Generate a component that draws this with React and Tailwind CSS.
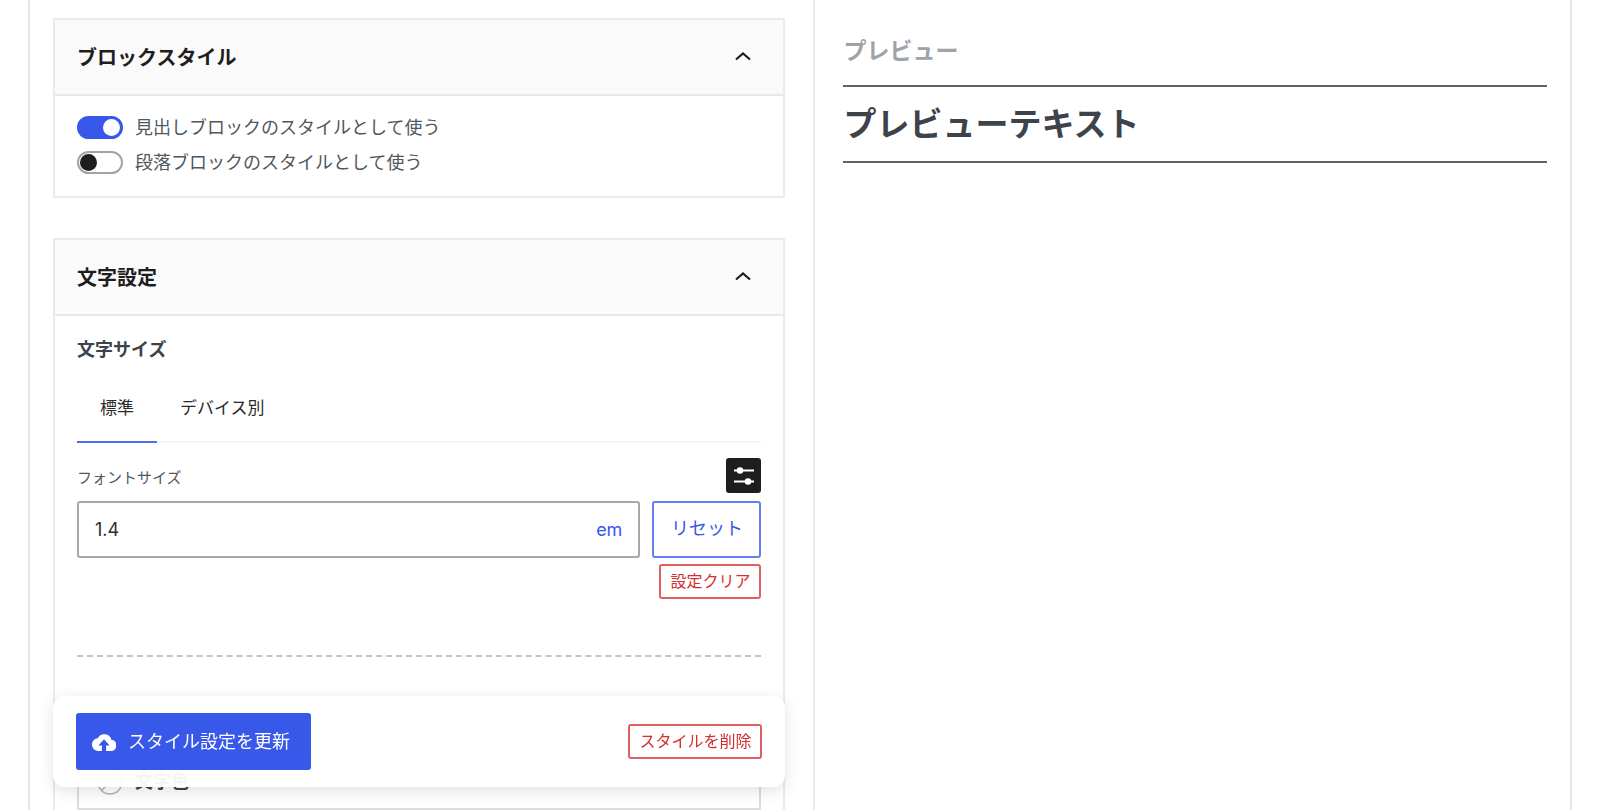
import { useState } from "react";

function Panel({ title, className = "", children }) {
  const [open, setOpen] = useState(true);

  return (
    <section className={`border-2 border-[#ebebec] ${className}`}>
      <h2>
        <button
          type="button"
          aria-expanded={open}
          onClick={() => setOpen(!open)}
          className="flex h-19 w-full items-center justify-between border-b-2 border-[#e8e8ea] bg-[#fafafa] pt-[2px] pr-8 pl-[22px] text-xl font-bold text-[#1e1e1e]"
        >
          {title}
          <svg
            viewBox="0 0 16 14"
            className={open ? "h-[14px] w-4" : "h-[14px] w-4 rotate-180"}
            fill="none"
            stroke="currentColor"
            strokeWidth="2.2"
          >
            <path d="M1 8.5 8 2.5 15 8.5" />
          </svg>
        </button>
      </h2>
      {open && <div className="px-[22px]">{children}</div>}
    </section>
  );
}

function Toggle({ label, defaultChecked = false }) {
  return (
    <label className="flex w-fit items-center gap-3 text-[18px] leading-[23px] text-[#50575e]">
      <input type="checkbox" role="switch" defaultChecked={defaultChecked} className="peer sr-only" />
      <span className="h-[23px] w-[46px] rounded-full border-2 border-[#a3a3a3] bg-white p-[1px] peer-checked:border-[#3858e9] peer-checked:bg-[#3858e9] peer-checked:[&>span]:translate-x-[23px] peer-checked:[&>span]:bg-white">
        <span className="block h-[17px] w-[17px] rounded-full bg-[#1e1e1e]" />
      </span>
      {label}
    </label>
  );
}

function DangerButton({ children, onClick }) {
  return (
    <button
      type="button"
      onClick={onClick}
      className="h-[35px] rounded-[3px] border-2 border-[#df6060] px-[9px] text-[16px] leading-[31px] text-[#d32f2f]"
    >
      {children}
    </button>
  );
}

export default function App() {
  const [tab, setTab] = useState("標準");
  const [size, setSize] = useState("1.4");

  return (
    <div className="h-screen overflow-hidden bg-white px-7 font-['Inter','Noto_Sans_CJK_JP',sans-serif] text-[#3c434a]">
      <main className="grid grid-cols-[51fr_49fr] border-x-2 border-[#e6e6e9]">
        <div className="border-r-2 border-[#ececf1] pt-[18px] pr-7 pb-6 pl-[23px]">
          <Panel title="ブロックスタイル">
            <div className="grid gap-3 pt-5 pb-[22px]">
              <Toggle label="見出しブロックのスタイルとして使う" defaultChecked />
              <Toggle label="段落ブロックのスタイルとして使う" />
            </div>
          </Panel>

          <Panel title="文字設定" className="mt-10">
            <h3 className="pt-5 text-[18px] leading-7 font-bold">文字サイズ</h3>

            <div role="tablist" className="mt-3 flex border-b-2 border-[#f5f5f5] text-[17px] text-[#2c2c2c]">
              {["標準", "デバイス別"].map((name) => (
                <button
                  key={name}
                  type="button"
                  role="tab"
                  aria-selected={tab === name}
                  onClick={() => setTab(name)}
                  className={`-mb-[2px] h-[67px] border-b-2 px-[23px] ${tab === name ? "border-[#4f6bf0]" : "border-transparent"}`}
                >
                  {name}
                </button>
              ))}
            </div>

            <div className="mt-[15px] flex items-end justify-between">
              <label htmlFor="font-size" className="text-[15px] leading-[31px] text-[#50575e]">フォントサイズ</label>
              <button type="button" aria-label="単位" className="flex h-[35px] w-[35px] items-center justify-center rounded-[3px] bg-[#1e1e1e] text-white">
                <svg viewBox="0 0 22 22" className="h-[22px] w-[22px]" fill="currentColor" stroke="currentColor" strokeWidth="2">
                  <path d="M1 5.5h20M1 16.5h20" fill="none" />
                  <circle cx="7" cy="5.5" r="2.3" />
                  <circle cx="15" cy="16.5" r="2.3" />
                </svg>
              </button>
            </div>

            <div className="mt-2 flex gap-3">
              <div className="flex h-[57px] min-w-0 flex-1 items-center rounded-[3px] border-2 border-[#a8a8a8] px-4 text-[18px]">
                <input
                  id="font-size"
                  type="text"
                  value={size}
                  onChange={(e) => setSize(e.target.value)}
                  className="min-w-0 flex-1 text-[#2c2c2c] outline-none"
                />
                <span className="text-[#3858e9]">em</span>
              </div>
              <button type="button" onClick={() => setSize("1.4")} className="h-[57px] w-[109px] rounded-[3px] border-2 border-[#667ef2] pb-[2px] text-[18px] text-[#3858e9]">
                リセット
              </button>
            </div>
            <div className="mt-[6px] flex justify-end">
              <DangerButton onClick={() => setSize("")}>設定クリア</DangerButton>
            </div>

            <hr className="mt-[56px] border-t-2 border-dashed border-[#c4c4c4]" />

            <div className="mt-24 mb-6 flex h-[57px] items-center gap-3 border-2 border-[#dcdce4] px-[18px]">
              <svg viewBox="0 0 26 26" className="h-[26px] w-[26px]" fill="none" stroke="#b4b4b4" strokeWidth="1.5">
                <circle cx="13" cy="13" r="12" />
                <path d="M4.5 21.5 21.5 4.5" />
              </svg>
              <h3 className="text-[18px] font-bold">文字色</h3>
            </div>
          </Panel>

          {/* Action bar that stays over the settings */}
          <div className="sticky bottom-[23px] flex h-[91px] items-center justify-between rounded-xl bg-white/95 px-[23px] shadow-[0_4px_16px_rgba(0,0,0,0.12)]">
            <button type="button" className="flex h-[57px] w-[235px] items-center gap-3 rounded-[3px] bg-[#3858e9] px-4 text-[18px] text-white">
              <svg viewBox="0 0 24 18" className="h-[18px] w-6 shrink-0" fill="currentColor">
                <path d="M19.4 6.8A7.3 7.3 0 0 0 5.8 5.2 6.2 6.2 0 0 0 0 11.8 6.2 6.2 0 0 0 6.2 18H9.9V12.6H6.4L12 6.2l5.6 6.4h-3.5V18h4.3a5.6 5.6 0 0 0 1-11.2Z" />
              </svg>
              スタイル設定を更新
            </button>
            <DangerButton>スタイルを削除</DangerButton>
          </div>
        </div>

        <div className="pt-9 pr-[23px] pl-7">
          <h2 className="text-[23px] leading-[30px] font-bold text-[#9ea3a8]">プレビュー</h2>
          <p className="mt-[19px] border-y-2 border-[#636363] py-3 text-[33px] leading-[50px] font-bold">プレビューテキスト</p>
        </div>
      </main>
    </div>
  );
}
